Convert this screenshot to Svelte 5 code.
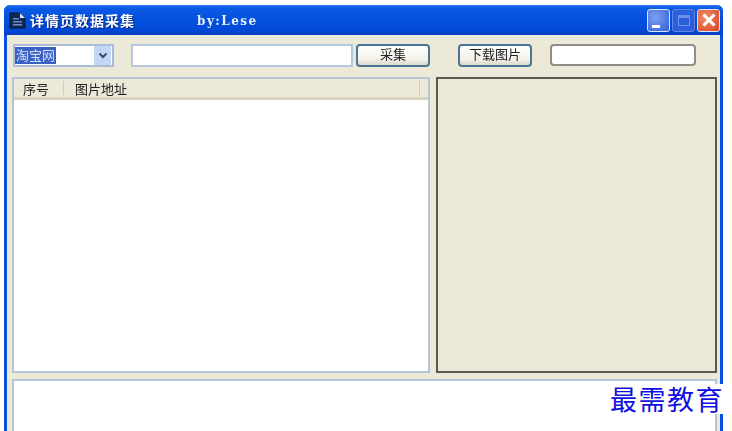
<script lang="ts">
    const columns = [
        { label: "序号", width: 50 },
        { label: "图片地址", width: 356 },
    ];
</script>

<div class="window">
    <header class="titlebar">
        <svg class="app-icon" viewBox="0 0 17 17" width="17" height="17">
            <path d="M1 1h10l5 5v10H1z" fill="#0a2a5c" stroke="#04122e" stroke-width="1" />
            <path d="M11 1v5h5z" fill="#dfe8f5" />
            <path d="M4 6h6v1.500H4zM4 9h9v1.500H4zM4 12h9v1.500H4z" fill="#6f8fbd" />
        </svg>
        <span class="title">详情页数据采集</span>
        <span class="author">by:Lese</span>
        <div class="controls">
            <span class="ctl min"><i></i></span>
            <span class="ctl max"><i></i></span>
            <span class="ctl close">
                <svg viewBox="0 0 20 20" width="20" height="20">
                    <path d="M4.500 4.500l11 11M15.500 4.500l-11 11" stroke="#fff" stroke-width="3" />
                </svg>
            </span>
        </div>
    </header>

    <div class="body">
        <div class="toolbar">
            <div class="select">
                <span class="selected">淘宝网</span>
                <span class="arrow">
                    <svg viewBox="0 0 10 8" width="10" height="8">
                        <path d="M1.500 2.500L5 6l3.500-3.500" fill="none" stroke="#33496f" stroke-width="2" />
                    </svg>
                </span>
            </div>
            <div class="input url"></div>
            <button class="btn collect">采集</button>
            <button class="btn download">下载图片</button>
            <div class="input path"></div>
        </div>

        <div class="main">
            <div class="list">
                <div class="list-head">
                    {#each columns as col}
                        <span class="col" style="width: {col.width}px">{col.label}</span>
                    {/each}
                </div>
            </div>
            <div class="preview"></div>
        </div>

        <div class="log"></div>
    </div>
</div>

<div class="watermark">最需教育</div>

<style>
    :global(body) {
        margin: 0;
        background: #fff;
        overflow: hidden;
    }

    .window {
        box-sizing: border-box;
        width: 719px;
        height: 426px;
        margin: 5px 0 0 4px;
        display: flex;
        flex-direction: column;
        background: #0a50e0;
        border-radius: 6px 6px 0 0;
        overflow: hidden;
        filter: blur(0.45px);
        font-family: "Liberation Sans", "Noto Sans CJK SC", sans-serif;
    }

    .titlebar {
        height: 30px;
        flex: none;
        display: flex;
        align-items: center;
        padding: 0 3px 0 5px;
        color: #fff;
        background: linear-gradient(#2a78f4 0, #0b5ae6 10%, #0450dc 50%, #0248d6 85%, #0a3fc0 100%);
    }

    .app-icon {
        flex: none;
        margin-top: 1px;
    }

    .title {
        margin-left: 4px;
        width: 167px;
        font: bold 14px/16px "Noto Sans CJK SC", sans-serif;
        letter-spacing: 1px;
        text-shadow: 1px 1px 1px #0a2a80;
    }

    .author {
        margin-top: 2px;
        font: bold 12px "DejaVu Serif", serif;
        letter-spacing: 1.500px;
        color: #e6eeff;
    }

    .controls {
        margin-left: auto;
        display: flex;
        gap: 2px;
    }

    .ctl {
        box-sizing: border-box;
        width: 23px;
        height: 23px;
        display: flex;
        align-items: center;
        justify-content: center;
        border: 1px solid #dbe6fb;
        border-radius: 3px;
        position: relative;
    }

    .min {
        background: radial-gradient(circle at 35% 35%, #7f9ff0, #2f5ed8);
    }

    .min i {
        position: absolute;
        left: 4px;
        bottom: 3px;
        width: 8px;
        height: 3px;
        background: #fff;
    }

    .max {
        border-color: #5f86e6;
        background: #2c5fdc;
    }

    .max i {
        width: 12px;
        height: 11px;
        border: 1px solid #6d90e8;
        border-top-width: 3px;
        box-sizing: border-box;
    }

    .close {
        background: radial-gradient(circle at 35% 35%, #ee8f70, #d8431c);
    }

    .body {
        flex: 1;
        min-height: 0;
        display: flex;
        flex-direction: column;
        margin: 0 3px;
        padding: 0 3px 0 5px;
        background: #ece9d8;
    }

    .toolbar {
        box-sizing: border-box;
        height: 42px;
        flex: none;
        display: flex;
        align-items: center;
        padding-bottom: 2px;
    }

    .select {
        box-sizing: border-box;
        width: 101px;
        height: 23px;
        margin-left: 1px;
        display: flex;
        align-items: center;
        justify-content: space-between;
        padding: 0 1px 0 0;
        background: #fff;
        border: 2px solid #a9bdd6;
    }

    .selected {
        padding: 1px 1px;
        font-size: 13px;
        line-height: 15px;
        background: #3a62c4;
        color: #d5def2;
    }

    .arrow {
        width: 17px;
        height: 19px;
        display: flex;
        align-items: center;
        justify-content: center;
        background: #c5d5f5;
    }

    .input {
        box-sizing: border-box;
        height: 23px;
        background: #fff;
    }

    .url {
        width: 222px;
        margin-left: 17px;
        border: 2px solid #b4c8de;
    }

    .path {
        width: 146px;
        height: 22px;
        margin-left: 18px;
        border: 2px solid #8e8e86;
        border-radius: 4px;
    }

    .btn {
        box-sizing: border-box;
        width: 74px;
        height: 23px;
        padding: 0 0 3px;
        border: 2px solid #4a7597;
        border-radius: 4px;
        background: linear-gradient(#fff, #f2f1ea 70%, #dcd8cc);
        color: #222;
        font: 13px/16px "Noto Sans CJK SC", sans-serif;
    }

    .collect {
        margin-left: 3px;
    }

    .download {
        margin-left: 28px;
    }

    .main {
        height: 296px;
        flex: none;
        display: flex;
        gap: 6px;
    }

    .list {
        box-sizing: border-box;
        width: 419px;
        background: #fff;
        border: 2px solid #b4c6d6;
    }

    .list-head {
        box-sizing: border-box;
        height: 21px;
        display: flex;
        align-items: center;
        background: #ece9d8;
        border-bottom: 3px solid #d8d3bd;
    }

    .col {
        box-sizing: border-box;
        padding-left: 9px;
        height: 14px;
        border-right: 1px solid #cfcbb8;
        font: 13px/15px "Noto Sans CJK SC", sans-serif;
        color: #222;
    }

    .col + .col {
        padding-left: 11px;
    }

    .preview {
        box-sizing: border-box;
        width: 281px;
        background: #ece9d8;
        border: 2px solid #5a5a50;
    }

    .log {
        flex: 1;
        margin-top: 6px;
        background: #fff;
        border: 2px solid #b4c6d6;
        border-bottom: 0;
    }

    .watermark {
        position: absolute;
        left: 610px;
        top: 384px;
        font: 27px/30px "Noto Sans CJK SC", serif;
        letter-spacing: 1.500px;
        white-space: nowrap;
        color: #1010e0;
        background: #fff;
    }
</style>
